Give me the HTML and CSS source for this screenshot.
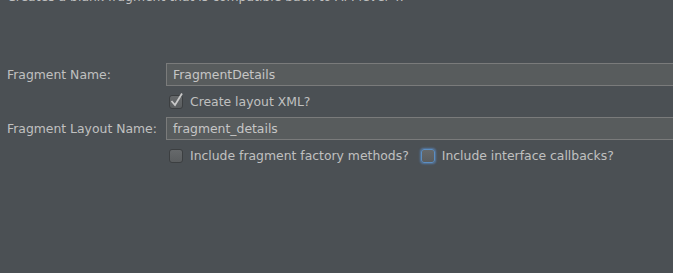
FILE: index.html
```html
<!DOCTYPE html>
<html lang="en">
<head>
    <meta charset="UTF-8">
    <title>New Blank Fragment</title>
    <link rel="stylesheet" href="styles.css">
</head>
<body>
    <p class="desc">Creates a blank fragment that is compatible back to API level 4.</p>

    <div class="form">
        <label class="label">Fragment Name:</label>
        <div class="field">FragmentDetails</div>

        <div></div>
        <div class="check-row">
            <span class="box">
                <svg width="14" height="14" viewBox="0 0 14 14"><path d="M2.5 7 L6 11 L13 -0.5" fill="none" stroke="#c8c8c8" stroke-width="1.8"/></svg>
            </span>
            <span>Create layout XML?</span>
        </div>

        <label class="label">Fragment Layout Name:</label>
        <div class="field">fragment_details</div>

        <div></div>
        <div class="check-row">
            <span class="box"></span>
            <span>Include fragment factory methods?</span>
            <span class="box focused"></span>
            <span>Include interface callbacks?</span>
        </div>
    </div>
</body>
</html>
```

FILE: styles.css
```css
html, body {
    overflow: hidden;
}
body {
    background-color: #4b5054;
    color: #c0c0c0;
    font-family: 'DejaVu Sans', sans-serif;
    font-size: 12.4px;
    margin: 0;
    padding: 0;
}
.desc {
    margin: -11px 0 0 7px;
    height: 15px;
    line-height: 15px;
}
.form {
    display: grid;
    grid-template-columns: 159px 1fr;
    padding-left: 7px;
    margin-top: 59px;
    margin-right: -10px;
}
.label {
    display: flex;
    align-items: center;
    height: 23px;
}
.field {
    box-sizing: border-box;
    height: 23px;
    background-color: #585c5d;
    border: 1px solid #7a7b7b;
    padding-left: 6px;
    line-height: 21px;
    color: #c6c6c6;
}
.check-row {
    display: flex;
    align-items: center;
    height: 31px;
    padding-left: 3px;
    gap: 7px;
}
.box {
    box-sizing: border-box;
    width: 14px;
    height: 14px;
    border-radius: 3px;
    border: 1px solid #3c3f41;
    background: linear-gradient(#66696b, #5a5d5f);
    display: flex;
    align-items: center;
    justify-content: center;
}
.box svg {
    display: block;
    margin-top: -2px;
    overflow: visible;
}
.box.focused {
    margin-left: 5px;
    border-color: #5b8ec2;
    box-shadow: 0 0 2px 1px rgba(90, 140, 200, 0.7);
}
```
